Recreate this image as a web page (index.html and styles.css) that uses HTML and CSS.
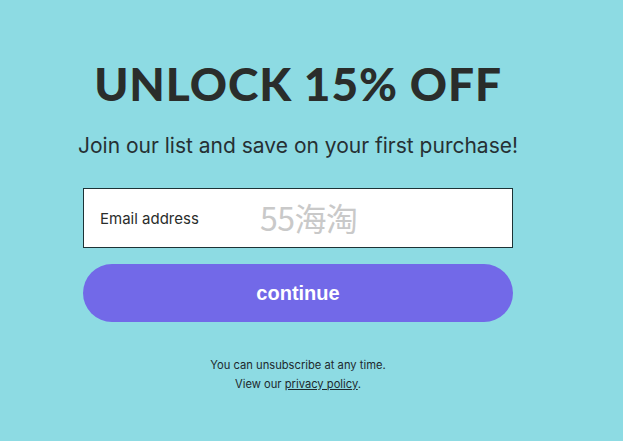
FILE: index.html
```html
<!DOCTYPE html>
<html>
<head>
<meta charset="utf-8">
<link rel="stylesheet" href="styles.css">
</head>
<body>
<div class="panel">
  <h1 class="title">UNLOCK 15% OFF</h1>
  <p class="subtitle">Join our list and save on your first purchase!</p>
  <div class="field">
    <span class="placeholder">Email address</span>
    <span class="watermark">55海淘</span>
  </div>
  <button class="btn">continue</button>
  <div class="fine">
    <p>You can unsubscribe at any time.</p>
    <p>View our <a href="#" class="link">privacy policy</a>.</p>
  </div>
</div>
</body>
</html>
```
FILE: styles.css
```css
html, body {
  margin: 0;
  padding: 0;
  background: #8ddbe3;
  width: 623px;
  height: 441px;
  overflow: hidden;
}
.panel {
  width: 430px;
  margin-left: 83px;
  padding-top: 57px;
  display: flex;
  flex-direction: column;
  align-items: center;
  font-family: "Inter", "Open Sans", sans-serif;
  color: #2a2d2b;
}
.title {
  margin: 0;
  font-family: "Lato", sans-serif;
  font-weight: 900;
  font-size: 46px;
  line-height: 54px;
  letter-spacing: 0.9px;
  white-space: nowrap;
  color: #2a2d2b;
}
.subtitle {
  margin: 23px 0 0;
  font-size: 21px;
  line-height: 24px;
  white-space: nowrap;
  color: #263033;
}
.field {
  margin-top: 30px;
  width: 430px;
  height: 60px;
  box-sizing: border-box;
  border: 1px solid #1d3336;
  background: #fff;
  position: relative;
  display: flex;
  align-items: center;
  padding-left: 16px;
}
.placeholder {
  font-size: 15px;
  color: #2a2d2b;
}
.watermark {
  position: absolute;
  left: 176px;
  top: 9px;
  font-family: "Noto Sans CJK SC", sans-serif;
  font-size: 32px;
  line-height: 38px;
  letter-spacing: -0.5px;
  color: #c9c9c9;
}
.btn {
  margin-top: 16px;
  width: 430px;
  height: 58px;
  border: none;
  border-radius: 29px;
  background: #7269e8;
  color: #fff;
  font-family: "Liberation Sans", Arial, sans-serif;
  font-weight: bold;
  font-size: 20px;
  padding: 0;
}
.fine {
  margin-top: 34px;
  text-align: center;
  font-size: 11.2px;
  line-height: 19px;
  color: #1e2a2e;
}
.fine p {
  margin: 0;
}
.link {
  color: #1e2a2e;
  text-decoration: underline;
}
```
